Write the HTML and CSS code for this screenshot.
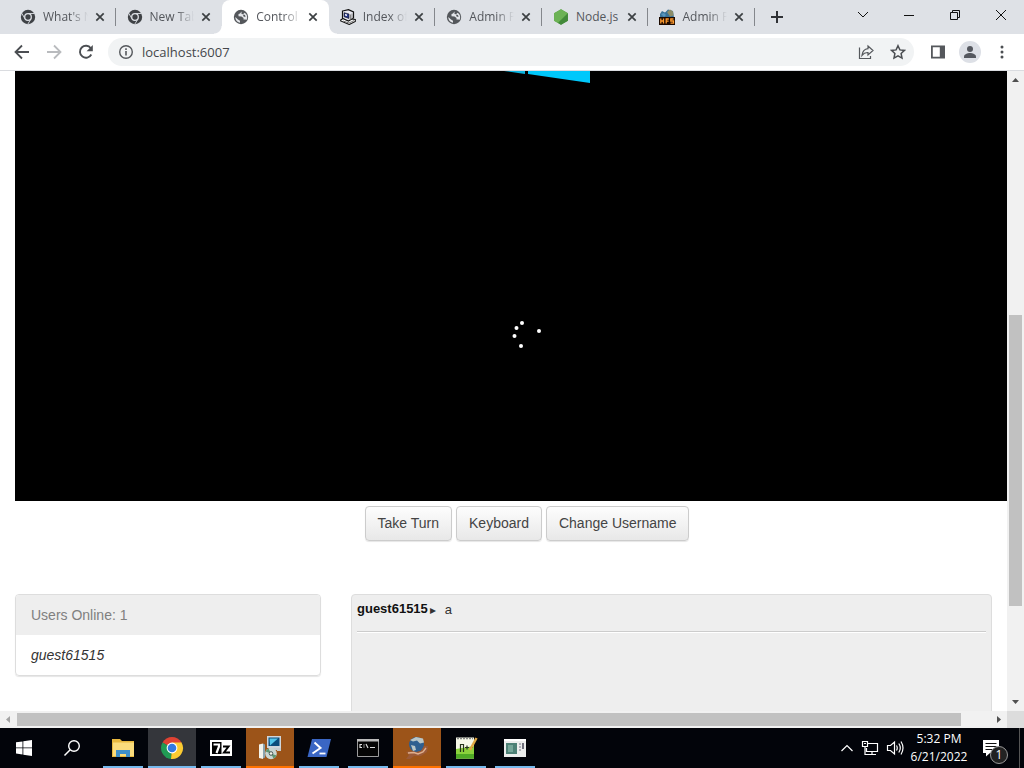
FILE: index.html
```html
<!DOCTYPE html>
<html lang="en">
<head>
    <meta charset="UTF-8">
    <meta name="viewport" content="width=device-width, initial-scale=1.0">
    <title>Control</title>
    <link rel="stylesheet" href="styles.css">
</head>
<body>
    <!-- Shared icons -->
    <svg class="defs" width="0" height="0" aria-hidden="true">
        <symbol id="i-chrome-dark" viewBox="0 0 16 16">
            <circle cx="8" cy="8" r="7.200" fill="#3f4246"/>
            <path d="M8 4.500h6.500M5 9.800L1.700 4.200M11 9.800L7.800 15.200" stroke="#dee1e6" stroke-width=".9" fill="none"/>
            <circle cx="8" cy="8" r="3.300" fill="#3f4246" stroke="#dee1e6" stroke-width="1.300"/>
        </symbol>
        <symbol id="i-globe" viewBox="0 0 16 16">
            <circle cx="8" cy="8" r="7.200" fill="#54575b"/>
            <path d="M8.500 2.500L7 4.500 5.500 5v2.200l3 .3 2 1.500v1.500h2l1 .500a6 6 0 0 0-1.800-7.300l-1.700 1.500-1.500-.2zM2.300 8a5.800 5.800 0 0 0 4.700 5.700v-2L5 10.500z" fill="#e4e6ea"/>
            <path d="M10 5.500l2 .5.500 2-2-.5z" fill="#54575b"/>
        </symbol>
        <symbol id="i-x" viewBox="0 0 10 10">
            <path d="M1.300 1.300l7.400 7.400M8.700 1.300L1.300 8.700" stroke="#3c4043" stroke-width="1.700"/>
        </symbol>
    </svg>

    <div class="window">
        <header class="tab-strip">
            <div class="tabs">
                <div class="tab">
                    <svg class="favicon"><use href="#i-chrome-dark"/></svg>
                    <span class="title">What's New</span>
                    <button class="close" aria-label="Close tab"><svg><use href="#i-x"/></svg></button>
                </div>
                <div class="tab no-line">
                    <svg class="favicon"><use href="#i-chrome-dark"/></svg>
                    <span class="title">New Tab</span>
                    <button class="close" aria-label="Close tab"><svg><use href="#i-x"/></svg></button>
                </div>
                <div class="tab active no-line">
                    <svg class="favicon"><use href="#i-globe"/></svg>
                    <span class="title">Control</span>
                    <button class="close" aria-label="Close tab"><svg><use href="#i-x"/></svg></button>
                </div>
                <div class="tab">
                    <svg class="favicon" viewBox="0 0 16 16">
                        <path d="M.7 11l3-2 11.600 1.500v2l-6 3-8.600-3.500z" fill="#fff" stroke="#111" stroke-width="1.100"/>
                        <path d="M2.500 2L8.500.6l5 2.400v6l-5 3-6-2.600z" fill="#e9e9f2" stroke="#111" stroke-width="1.200"/>
                        <path d="M4 3.700l5 1.300v4.500l-5-1.800z" fill="#26378c" stroke="#111" stroke-width=".6"/>
                        <path d="M5 5l2 .5v1.500l-2-.5z" fill="#fff"/>
                        <path d="M10.500 5.500v5M12 4.500v5" stroke="#888" fill="none"/>
                        <path d="M3 12l6 2 5-2.400" stroke="#777" fill="none"/>
                    </svg>
                    <span class="title">Index of /</span>
                    <button class="close" aria-label="Close tab"><svg><use href="#i-x"/></svg></button>
                </div>
                <div class="tab">
                    <svg class="favicon"><use href="#i-globe"/></svg>
                    <span class="title">Admin Panel</span>
                    <button class="close" aria-label="Close tab"><svg><use href="#i-x"/></svg></button>
                </div>
                <div class="tab">
                    <svg class="favicon" viewBox="0 0 16 16">
                        <path d="M8 .3l6.900 3.900v7.600L8 15.700l-6.900-3.900V4.200z" fill="#539e43"/>
                        <path d="M8 .3l6.900 3.900L5 14 1.100 11.800V4.200z" fill="#6cb255"/>
                        <path d="M14.900 4.200v7.600L8 15.700l-3-1.700z" fill="#438a3a"/>
                    </svg>
                    <span class="title full">Node.js</span>
                    <button class="close" aria-label="Close tab"><svg><use href="#i-x"/></svg></button>
                </div>
                <div class="tab">
                    <svg class="favicon" viewBox="0 0 16 16">
                        <path d="M1 9V5l2-3 3 1.500L9 .5l5 1.500 1 7z" fill="#387398"/>
                        <path d="M8 3l3-2.500 3 2 .5 4-3.500 1z" fill="#8c8d68"/>
                        <path d="M2 5l3-1 2 2-2 2z" fill="#5696bd"/>
                        <rect y="8" width="16" height="8" fill="#1c0a00"/>
                        <path d="M1.800 9.500v5M1.800 12h2.500M4.500 9.500v5M7.200 14.500V10h2.600M7.200 12.200h2.400M14.500 10h-2.700v2h2.700v2.200h-3" stroke="#ff9b2e" stroke-width="1.300" fill="none"/>
                    </svg>
                    <span class="title">Admin Panel</span>
                    <button class="close" aria-label="Close tab"><svg><use href="#i-x"/></svg></button>
                </div>
            </div>
            <button class="new-tab" aria-label="New tab">
                <svg width="14" height="14" viewBox="0 0 14 14"><path d="M7 1v12M1 7h12" stroke="#303236" stroke-width="2"/></svg>
            </button>
            <div class="window-buttons">
                <button aria-label="Search tabs"><svg width="12" height="12" viewBox="0 0 12 12"><path d="M1 3l5 5 5-5"/></svg></button>
                <button aria-label="Minimize"><svg width="12" height="12" viewBox="0 0 12 12"><path d="M1 6.500h10"/></svg></button>
                <button aria-label="Restore"><svg width="12" height="12" viewBox="0 0 12 12"><path d="M1.500 3.500h7v7h-7zM3.500 3.500v-2h7v7h-2"/></svg></button>
                <button aria-label="Close"><svg width="12" height="12" viewBox="0 0 12 12"><path d="M1 1l10 10M11 1L1 11"/></svg></button>
            </div>
        </header>

        <nav class="toolbar">
            <button aria-label="Back"><svg width="16" height="16" viewBox="0 0 16 16"><path d="M15 8H2M8 1.500L1.500 8 8 14.500" fill="none" stroke="#4b4e52" stroke-width="1.800"/></svg></button>
            <button aria-label="Forward"><svg width="16" height="16" viewBox="0 0 16 16"><path d="M1 8h13M8 1.500L14.500 8 8 14.500" fill="none" stroke="#b9bbbe" stroke-width="1.800"/></svg></button>
            <button aria-label="Reload"><svg width="16" height="16" viewBox="0 0 16 16"><path d="M13.300 10.500A6 6 0 1 1 12.800 4.200" fill="none" stroke="#4b4e52" stroke-width="1.900"/><path d="M14.800 1v6.200H8.600z" fill="#4b4e52"/></svg></button>
            <div class="omnibox">
                <svg width="16" height="16" viewBox="0 0 16 16"><circle cx="8" cy="8" r="6.300" fill="none" stroke="#55585c" stroke-width="1.400"/><path d="M8 7v4.500M8 4.300v1.600" stroke="#55585c" stroke-width="1.600"/></svg>
                <input type="text" value="localhost:6007" aria-label="Address">
                <button aria-label="Share"><svg width="16" height="16" viewBox="0 0 16 16" fill="none" stroke="#55585c" stroke-width="1.200"><path d="M1.500 3.500v11h11V12"/><path d="M10 2l5 4.500-5 4.500V8.500C7.300 8.300 5.500 9.300 4 11.300 4.400 7.600 6.500 5 10 4.600z"/></svg></button>
                <button aria-label="Bookmark"><svg width="16" height="16" viewBox="0 0 16 16"><path d="M8 1.700l1.900 4.200 4.600.5-3.400 3.100.9 4.600L8 11.800l-4 2.300.9-4.600L1.500 6.400l4.600-.5z" fill="none" stroke="#4b4e52" stroke-width="1.500"/></svg></button>
            </div>
            <button aria-label="Side panel"><svg width="16" height="16" viewBox="0 0 16 16"><path d="M1 1.500h14v13H1zM2.800 3.200v9.600h7V3.200z" fill="#55585c" fill-rule="evenodd"/></svg></button>
            <button class="profile" aria-label="Profile"><svg width="22" height="22" viewBox="0 0 22 22"><circle cx="11" cy="11" r="11" fill="#dde0e6"/><circle cx="11" cy="8" r="3" fill="#55585f"/><path d="M5 17v-1.500c0-2.300 3.500-3.500 6-3.500s6 1.200 6 3.500V17z" fill="#55585f"/></svg></button>
            <button aria-label="Menu"><svg width="16" height="16" viewBox="0 0 16 16" fill="#4b4e52"><circle cx="8" cy="3" r="1.500"/><circle cx="8" cy="8" r="1.500"/><circle cx="8" cy="13" r="1.500"/></svg></button>
        </nav>

        <div class="viewport">
            <main class="page">
                <div class="vm">
                    <div class="display">
                        <svg class="logo" width="126" height="12" viewBox="0 0 126 12">
                            <path d="M40 0h21v3z" fill="#0bb4e0"/>
                            <path d="M64 0h62v12L64 3z" fill="#00c8fb"/>
                        </svg>
                        <svg class="spinner" width="32" height="30" viewBox="0 0 32 30" fill="#fff">
                            <circle cx="11" cy="3" r="2"/>
                            <circle cx="5.500" cy="8" r="2"/>
                            <circle cx="3.500" cy="16" r="2"/>
                            <circle cx="10" cy="26" r="2"/>
                            <circle cx="28" cy="11" r="2"/>
                        </svg>
                    </div>
                    <div class="controls">
                        <button class="btn">Take Turn</button>
                        <button class="btn">Keyboard</button>
                        <button class="btn">Change Username</button>
                    </div>
                </div>
                <div class="row">
                    <section class="users">
                        <div class="users-head">Users Online: 1</div>
                        <div class="user">guest61515</div>
                    </section>
                    <section class="chat">
                        <div class="message"><b>guest61515</b><span class="arrow">▸</span><span class="text">a</span></div>
                    </section>
                </div>
            </main>
            <div class="scroll-v">
                <svg class="cap" viewBox="0 0 17 17"><path d="M5 11l3.500-4 3.500 4z"/></svg>
                <div class="before"></div>
                <div class="thumb"></div>
                <div class="after"></div>
                <svg class="cap" viewBox="0 0 17 17"><path d="M5 6l3.500 4L12 6z"/></svg>
            </div>
            <div class="scroll-h">
                <svg class="cap dim" viewBox="0 0 17 17"><path d="M10 5L6 8.500l4 3.500z"/></svg>
                <div class="thumb"></div>
                <div class="after"></div>
                <svg class="cap" viewBox="0 0 17 17"><path d="M7 5l4 3.500L7 12z"/></svg>
            </div>
            <div class="corner"></div>
        </div>

        <footer class="taskbar">
            <button class="sys" aria-label="Start"><svg width="16" height="16" viewBox="0 0 16 16" fill="#fff"><path d="M0 2.300l6.500-.9v6.100H0zM7.300 1.300L16 0v7.500H7.300zM0 8.300h6.500v6.200L0 13.600zM7.300 8.300H16V16l-8.700-1.300z"/></svg></button>
            <button class="sys" aria-label="Search"><svg width="18" height="18" viewBox="0 0 18 18"><circle cx="11" cy="7" r="5.300" fill="none" stroke="#fff" stroke-width="1.400"/><path d="M7.200 10.800L1.500 16.500" stroke="#fff" stroke-width="1.500"/></svg></button>
            <div class="apps">
                <button class="app" aria-label="File Explorer"><svg viewBox="0 0 24 24"><path d="M1 3h8l2 2h12v16H1z" fill="#e8b83e"/><path d="M2 6.500h21V20H2z" fill="#fbdc7c"/><path d="M5 21v-7h14v7h-4v-3H9v3z" fill="#3f8fc9"/></svg></button>
                <button class="app current" aria-label="Chrome"><svg viewBox="0 0 24 24"><path d="M12 12L2.500 6.500A11 11 0 0 1 21.500 6.500z" fill="#df4233"/><path d="M12 12L11 23A11 11 0 0 1 2.500 6.500z" fill="#219b54"/><path d="M12 12l9.500-5.500A11 11 0 0 1 11 23z" fill="#fccb32"/><path d="M12 6.500h9.500L16.800 15z" fill="#fccb32"/><circle cx="12" cy="12" r="5.400" fill="#fff"/><circle cx="12" cy="12" r="4.300" fill="#3479e0"/></svg></button>
                <button class="app" aria-label="7-Zip"><svg viewBox="0 0 24 24"><path d="M1 4h22v16H1z" fill="#fff"/><path d="M3 6h9.500v12H3z" fill="#000"/><path d="M4.500 8.500H10v2L7.500 17" stroke="#fff" stroke-width="2.200" fill="none"/><path d="M14 10.500h5.500l-4.500 6h6" stroke="#000" stroke-width="2" fill="none"/></svg></button>
                <button class="app alert" aria-label="Installer"><svg viewBox="0 0 24 24"><path d="M9 0h14v12H9z" fill="#cfd6dc"/><path d="M10.500 1.500h11v8.500h-11z" fill="#0b4d7c"/><path d="M11.500 2.500h8.500L12 9.500z" fill="#53c6ea"/><path d="M13 12h6v2h-6zM19 12h4v3h-4z" fill="#c5cdd0"/><path d="M1 8.500l4-1V23l-4-1z" fill="#f2f2ea"/><path d="M5 7.500l2 1v13l-2 1z" fill="#8ba3ae"/><circle cx="13" cy="17.500" r="5.800" fill="#c9d6d2"/><path d="M13 17.500l-5.500-2a6 6 0 0 1 3-3zM13 17.500l5.500 2a6 6 0 0 1-3 3z" fill="#5d9570"/><circle cx="13" cy="17.500" r="1.800" fill="#f6f6e8" stroke="#455"/></svg></button>
                <button class="app" aria-label="PowerShell"><svg viewBox="0 0 24 24"><path d="M5 3h19l-4.500 18H.5z" fill="#3a66c4"/><path d="M7.500 6.500l6 5.500-8 5.500" stroke="#fff" stroke-width="2" fill="none"/><path d="M12.500 17.500h6" stroke="#fff" stroke-width="1.800"/></svg></button>
                <button class="app" aria-label="Command Prompt"><svg viewBox="0 0 24 24"><path d="M1.500 3.500h21v17h-21z" fill="#050505" stroke="#9c9c9c"/><path d="M1 3h22v2.500H1z" fill="#bcbcbc"/><path d="M6 8.500H4v3h2M8 8.500v1M8 10.500v1M10 8l2 4M14 11.500h5" stroke="#ddd" stroke-width="1.200" fill="none"/></svg></button>
                <button class="app alert" aria-label="Web Server"><svg viewBox="0 0 24 24"><circle cx="11.500" cy="8.500" r="7.500" fill="#2f5f90"/><path d="M5 4l6-3 7 1.500 1 4-4 1-3-3-4 1zM6 9l4 1 1 4-3 1z" fill="#b9c6c8"/><path d="M1 16l5-1 5 1 5-1 3-5 4 0-1 6-6 4-7 0-4 3H1l3-4z" fill="#9b5a38"/><path d="M3 17l6-.5 4 1.500 5-2 3-4" stroke="#dfae8c" stroke-width="1.400" fill="none"/></svg></button>
                <button class="app" aria-label="Notepad++"><svg viewBox="0 0 24 24"><path d="M2 1.500h18v21H2z" fill="#f5f8e8"/><path d="M2 13l18-3v12.500H2z" fill="#8bd23c"/><path d="M2 18h18v4.500H2z" fill="#4faa25"/><path d="M3 2.500h16" stroke="#888" stroke-width="1.500" stroke-dasharray="2 1"/><path d="M6.500 16V8.500h3V16M11 11.500h4M13 9.500v4M16 11.500h3" stroke="#26351c" stroke-width="1.200" fill="none"/><path d="M22.500 2L16 14" stroke="#e0a843" stroke-width="2.500"/></svg></button>
                <button class="app" aria-label="Control Panel"><svg viewBox="0 0 24 24"><path d="M1 3h22v18H1z" fill="#eceeed"/><path d="M1 3h22v2H1z" fill="#fff"/><path d="M3 7h11v11H3z" fill="#4d8176"/><path d="M5 9h5v7H5z" fill="#75a699"/><path d="M16 8h2M16 11h2M16 14h2" stroke="#778" stroke-width="1"/><path d="M20 7v6" stroke="#445" stroke-width="1.500"/></svg></button>
            </div>
            <div class="tray">
                <svg width="14" height="14" viewBox="0 0 14 14"><path d="M1.500 10L7 4.500l5.500 5.500"/></svg>
                <svg width="18" height="16" viewBox="0 0 18 16"><path d="M6 3.500h10.500v8H5.500V8M11 11.500v3M7 14.500h8M1.500 1.500h5v5h-5zM4 6.500v8h3M3 3.500h2"/></svg>
                <svg width="18" height="16" viewBox="0 0 18 16"><path d="M1.500 5.500h3l4-3.500v12l-4-3.500h-3zM10.500 5.500q1.500 2.500 0 5M12.800 3.500q3 4.500 0 9M15 1.500q4 6.500 0 13"/></svg>
            </div>
            <div class="clock"><span>5:32 PM</span><span>6/21/2022</span></div>
            <button class="notes" aria-label="Notifications">
                <svg width="18" height="18" viewBox="0 0 18 18"><path d="M1 1h16v13H8l-4 3.500V14H1z" fill="#fff"/><path d="M3.500 4.500h11M3.500 7.500h11M3.500 10.500h8" stroke="#111" stroke-width="1.200"/></svg>
                <span class="badge">1</span>
            </button>
            <div class="show-desktop"></div>
        </footer>
    </div>
</body>
</html>
```
FILE: styles.css
```css
* {
    box-sizing: border-box;
}
body {
    margin: 0;
    font-family: "Open Sans", "Noto Sans", sans-serif;
    font-size: 12px;
    background: #fff;
}
.defs {
    position: absolute;
}
button {
    border: 0;
    padding: 0;
    background: none;
    font: inherit;
    color: inherit;
}
svg {
    display: block;
    flex: none;
}
.window {
    display: flex;
    flex-direction: column;
    height: 100vh;
}

/* tabs */
.tab-strip {
    display: flex;
    flex: none;
    height: 34px;
    padding-left: 9px;
    background: #dee1e6;
}
.tabs {
    display: flex;
    flex: 0 1 746px;
    min-width: 0;
}
.tab {
    display: flex;
    flex: 1;
    align-items: center;
    min-width: 0;
    padding: 0 11px;
    background: linear-gradient(#84878c, #84878c) right center / 1px 18px no-repeat;
}
.tab.no-line {
    background: none;
}
.tab.active {
    position: relative;
    background: #fff;
    border-radius: 8px 8px 0 0;
}
.tab.active::before,
.tab.active::after {
    content: "";
    position: absolute;
    bottom: 0;
    width: 8px;
    height: 8px;
}
.tab.active::before {
    right: 100%;
    background: radial-gradient(circle at 0 0, transparent 7px, #fff 8px);
}
.tab.active::after {
    left: 100%;
    background: radial-gradient(circle at 100% 0, transparent 7px, #fff 8px);
}
.favicon {
    width: 16px;
    height: 16px;
}
.title {
    flex: 1;
    min-width: 0;
    margin: 0 7px;
    overflow: hidden;
    white-space: nowrap;
    line-height: 18px;
    color: #54575c;
    -webkit-mask-image: linear-gradient(90deg, #000 60%, transparent);
    mask-image: linear-gradient(90deg, #000 60%, transparent);
}
.title.full {
    margin-right: 4px;
    padding-right: 3px;
    -webkit-mask-image: none;
    mask-image: none;
}
.close svg {
    width: 10px;
    height: 10px;
}
.new-tab {
    width: 44px;
    display: grid;
    place-items: center;
}
.window-buttons {
    display: flex;
    margin-left: auto;
    padding-bottom: 5px;
}
.window-buttons button {
    width: 46px;
    display: grid;
    place-items: center;
}
.window-buttons path {
    fill: none;
    stroke: #111;
}

/* address bar */
.toolbar {
    display: flex;
    flex: none;
    align-items: center;
    height: 37px;
    padding: 0 14px;
    gap: 16px;
    border-bottom: 1px solid #dadce0;
    background: #fff;
}
.omnibox {
    display: flex;
    flex: 1;
    align-items: center;
    gap: 16px;
    height: 28px;
    margin-left: -2px;
    padding: 0 8px 0 10px;
    border-radius: 14px;
    background: #f1f3f4;
}
.omnibox input {
    flex: 1;
    min-width: 0;
    margin-left: -8px;
    padding: 0;
    border: 0;
    outline: 0;
    background: none;
    font: 13px/20px "Open Sans", "Noto Sans", sans-serif;
    color: #44474b;
}
.profile {
    margin: 0 -3px;
}

/* page */
.viewport {
    display: grid;
    flex: 1;
    min-height: 0;
    grid-template-columns: minmax(0, 1fr) 17px;
    grid-template-rows: minmax(0, 1fr) 17px;
}
.page {
    overflow: hidden;
    padding-left: 15px;
    font-family: "Liberation Sans", Arial, sans-serif;
    color: #333;
    background: #fff;
}
.vm {
    margin-right: -32px;
}
.display {
    display: flex;
    flex-direction: column;
    align-items: center;
    justify-content: space-between;
    height: 430px;
    padding-bottom: 151px;
    background: #000;
}
.controls {
    display: flex;
    justify-content: center;
    gap: 4px;
    padding: 5px 0 53px;
}
.btn {
    height: 35px;
    padding: 0 12px 2px;
    border: 1px solid #ccc;
    border-radius: 4px;
    background: linear-gradient(#fdfdfd, #e8e8e8);
    box-shadow: 0 1px 1px rgba(0,0,0,0.1);
    font-size: 14px;
    color: #444;
}
.row {
    display: grid;
    grid-template-columns: 306fr 641fr;
    gap: 30px;
    padding-right: 15px;
    font-size: 14px;
    line-height: 20px;
}
.users {
    align-self: start;
    border: 1px solid #ddd;
    border-radius: 4px;
    box-shadow: 0 1px 1px rgba(0,0,0,0.1);
    overflow: hidden;
}
.users-head {
    padding: 10px 15px;
    background: #eee;
    color: #808080;
}
.user {
    padding: 10px 15px;
    font-style: italic;
}
.chat {
    min-height: 300px;
    padding: 5px;
    border: 1px solid #ddd;
    border-radius: 4px;
    background: #eee;
}
.message {
    display: flex;
    align-items: flex-start;
    padding-bottom: 11px;
    border-bottom: 1px solid #ccc;
    box-shadow: 0 1px 0 #fff;
    font-size: 13px;
}
.message b {
    color: #111;
    line-height: 18px;
}
.message .arrow {
    width: 17px;
    padding-left: 2px;
    font-size: 12px;
}

/* scrollbars */
.scroll-v,
.scroll-h {
    display: flex;
    background: #f1f1f1;
}
.scroll-v {
    flex-direction: column;
    align-items: center;
}
.scroll-h {
    align-items: center;
}
.cap {
    width: 17px;
    height: 17px;
    fill: #505050;
}
.cap.dim {
    fill: #a3a3a3;
}
.thumb {
    background: #c1c1c1;
}
.scroll-v .before {
    flex: 227;
}
.scroll-v .thumb {
    flex: 291;
    width: 13px;
}
.scroll-v .after {
    flex: 88;
}
.scroll-h .thumb {
    flex: 944;
    height: 13px;
}
.scroll-h .after {
    flex: 29;
}
.corner {
    background: #dcdcdc;
}

/* taskbar */
.taskbar {
    display: flex;
    flex: none;
    height: 40px;
    background: #02040a;
    color: #fff;
}
.sys {
    width: 48px;
    display: grid;
    place-items: center;
}
.apps {
    display: flex;
    gap: 1px;
    margin-left: 3px;
}
.app {
    width: 48px;
    display: grid;
    place-items: center;
    background: linear-gradient(#76b9ed, #76b9ed) center bottom / 40px 2px no-repeat;
}
.app svg {
    width: 24px;
    height: 24px;
}
.app.current {
    background: linear-gradient(#76b9ed, #76b9ed) center bottom / 48px 2px no-repeat #34363b;
}
.app.alert {
    background: linear-gradient(#ff7200, #ff7200) center bottom / 48px 2px no-repeat #9c5419;
}
.tray {
    display: flex;
    align-items: center;
    gap: 7px;
    margin-left: auto;
}
.tray path {
    fill: none;
    stroke: #fff;
    stroke-width: 1.2;
}
.clock {
    display: flex;
    flex-direction: column;
    align-items: center;
    justify-content: center;
    width: 70px;
    line-height: 18px;
}
.notes {
    position: relative;
    display: grid;
    place-items: center;
    width: 34px;
}
.badge {
    position: absolute;
    left: 16px;
    top: 18px;
    width: 18px;
    height: 18px;
    border: 1px solid #999;
    border-radius: 50%;
    background: #222;
    font-size: 12px;
    line-height: 16px;
    text-align: center;
}
.show-desktop {
    width: 5px;
    margin-left: 11px;
    border-left: 1px solid #555;
}
```
